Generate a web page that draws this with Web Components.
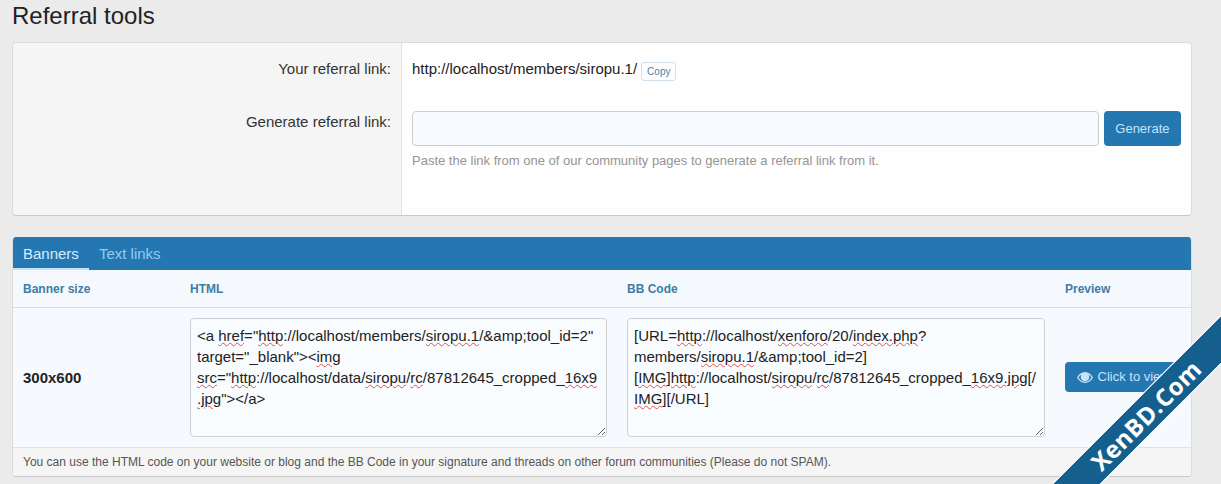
<!DOCTYPE html>
<html>
<head>
<meta charset="utf-8">
<title>Referral tools</title>
<style>
  html, body { margin: 0; height: 484px; overflow: hidden; }
  body { background: #ebebeb; color: #222; font: 15px/1.4 "Liberation Sans", Arial, sans-serif; }
  /* browser spell check look, drawn without splitting the text */
  rt-code::highlight(spell) { text-decoration: underline wavy #e05050 1px; text-underline-offset: 1px; }
</style>
</head>
<body>
<rt-page heading="Referral tools">
  <rt-form-card>
    <rt-form-row label="Your referral link:" label-top="5">
      <rt-link-value>http://localhost/members/siropu.1/</rt-link-value>
    </rt-form-row>
    <rt-form-row label="Generate referral link:" label-top="0">
      <rt-generate note="Paste the link from one of our community pages to generate a referral link from it."></rt-generate>
    </rt-form-row>
  </rt-form-card>

  <rt-block>
    <rt-tabs slot="tabs"></rt-tabs>
    <rt-head-row></rt-head-row>
    <rt-banner-row size="300x600">
      <rt-code slot="html" spell="href|http|siropu\.1|siropu|img|src|rc|16x9\.jpg">&lt;a href="http://localhost/members/siropu.1/&amp;amp;tool_id=2" target="_blank"&gt;&lt;img src="http://localhost/data/siropu/rc/87812645_cropped_16x9.jpg"&gt;&lt;/a&gt;</rt-code>
      <rt-code slot="bb" spell="http|xenforo|index\.php|siropu\.1|siropu|IMG|rc|16x9\.jpg">[URL=http://localhost/xenforo/20/index.php? members/siropu.1/&amp;amp;tool_id=2]<br>[IMG]http://localhost/siropu/rc/87812645_cropped_16x9.jpg[/<br>IMG][/URL]</rt-code>
      <rt-button slot="preview" icon="eye">Click to view</rt-button>
    </rt-banner-row>
    <rt-block-footer>You can use the HTML code on your website or blog and the BB Code in your signature and threads on other forum communities (Please do not SPAM).</rt-block-footer>
  </rt-block>
</rt-page>
<rt-ribbon>XenBD.Com</rt-ribbon>

<script>
// column widths shared by the head row and the banner rows
const COLS = '167px 437px 438px 1fr';

class RtPage extends HTMLElement {
  constructor() {
    super();
    this.attachShadow({ mode: 'open' });
    this.shadowRoot.innerHTML = `
      <style>
        :host { display: block; padding: 0 29px 0 12px; }
        h1 { margin: 0; height: 42px; font-size: 24px; font-weight: 400; line-height: 32px; color: #222; }
        .stack { display: flex; flex-direction: column; gap: 21px; }
      </style>
      <h1>${this.getAttribute('heading')}</h1>
      <div class="stack"><slot></slot></div>
    `;
  }
}

class RtFormCard extends HTMLElement {
  constructor() {
    super();
    this.attachShadow({ mode: 'open' });
    this.shadowRoot.innerHTML = `
      <style>
        :host {
          display: block;
          height: 174px;
          box-sizing: border-box;
          padding-top: 10px;
          border: 1px solid #dcdcdc;
          border-bottom-color: #c8c8c8;
          border-radius: 4px;
          background: linear-gradient(to right, #f5f5f5 388px, #e4e4e4 388px, #e4e4e4 389px, #fefefe 389px);
        }
      </style>
      <slot></slot>
    `;
  }
}

class RtFormRow extends HTMLElement {
  constructor() {
    super();
    this.attachShadow({ mode: 'open' });
    this.shadowRoot.innerHTML = `
      <style>
        :host { display: grid; grid-template-columns: 389px 1fr; }
        .label { padding: ${this.getAttribute('label-top')}px 11px 0 0; text-align: right; color: #333; }
        .value { padding: 0 10px 0 10px; }
      </style>
      <div class="label">${this.getAttribute('label')}</div>
      <div class="value"><slot></slot></div>
    `;
  }
}

class RtLinkValue extends HTMLElement {
  constructor() {
    super();
    this.attachShadow({ mode: 'open' });
    this.shadowRoot.innerHTML = `
      <style>
        :host { display: flex; align-items: center; gap: 4px; height: 31px; margin-bottom: 27px; color: #222; }
        .copy {
          height: 19px; padding: 0 5px; box-sizing: border-box;
          border: 1px solid #d3dfe8; border-radius: 3px;
          background: #fbfdff; color: #4f82a8; font-size: 10px; line-height: 18px;
          margin-top: 6px;
        }
      </style>
      <span><slot></slot></span>
      <span class="copy">Copy</span>
    `;
  }
}

class RtGenerate extends HTMLElement {
  constructor() {
    super();
    this.attachShadow({ mode: 'open' });
    this.shadowRoot.innerHTML = `
      <style>
        :host { display: block; }
        .line { display: flex; gap: 5px; }
        input {
          flex: 1; min-width: 0; height: 35px; box-sizing: border-box; margin: 0;
          border: 1px solid #ccc; border-radius: 4px; background: #f7fbff;
        }
        .note { margin-top: 6px; font-size: 13px; line-height: 18px; color: #959595; }
      </style>
      <div class="line"><input type="text"><rt-button>Generate</rt-button></div>
      <div class="note">${this.getAttribute('note')}</div>
    `;
  }
}

class RtButton extends HTMLElement {
  constructor() {
    super();
    this.attachShadow({ mode: 'open' });
    const eye = this.getAttribute('icon') === 'eye'
      ? `<svg width="16" height="11" viewBox="0 0 16 11"><path fill="#c4e4fb" fill-rule="evenodd" d="M8 0C4.600 0 1.700 2.100 0 5.500 1.700 8.900 4.600 11 8 11s6.300-2.100 8-5.500C14.300 2.100 11.400 0 8 0zM8 9.800C5.300 9.800 3 8.200 1.500 5.500 2.300 4.200 3.300 3.100 4.500 2.400 4 3.100 3.700 4 3.700 5c0 2.400 1.900 4.300 4.300 4.300s4.300-1.900 4.300-4.300c0-1-.3-1.900-.8-2.600 1.200.7 2.200 1.800 3 3.100C13 8.200 10.700 9.800 8 9.800z"/><circle cx="8" cy="5" r="3" fill="#c4e4fb"/></svg>`
      : '';
    this.shadowRoot.innerHTML = `
      <style>
        :host {
          display: inline-flex; align-items: center; gap: 5px;
          box-sizing: border-box; padding: 1px 11.5px 0;
          height: 35px;
          border-radius: 4px;
          background: #2577b1;
          color: #c4e4fb; font-size: 13px; white-space: nowrap;
        }
        :host([icon]) { height: 30px; margin-bottom: 2px; }
      </style>
      ${eye}<slot></slot>
    `;
  }
}

class RtBlock extends HTMLElement {
  constructor() {
    super();
    this.attachShadow({ mode: 'open' });
    this.shadowRoot.innerHTML = `
      <style>
        :host {
          display: block; height: 240px; box-sizing: border-box;
          border: 1px solid #dcdcdc; border-top: 0; border-bottom-color: #c8c8c8;
          border-radius: 4px; overflow: hidden; background: #f5f9fd;
        }
      </style>
      <slot name="tabs"></slot>
      <slot></slot>
    `;
  }
}

class RtTabs extends HTMLElement {
  constructor() {
    super();
    this.attachShadow({ mode: 'open' });
    this.shadowRoot.innerHTML = `
      <style>
        :host { display: flex; height: 33px; background: #2577b1; font-size: 15px; line-height: 33px; }
        a { display: block; padding: 0 10px; height: 33px; box-sizing: border-box; color: #8fcdf5; }
        a.active { color: #d5edff; border-bottom: 2px solid #c4e4fb; }
      </style>
      <a class="active">Banners</a>
      <a>Text links</a>
    `;
  }
}

class RtHeadRow extends HTMLElement {
  constructor() {
    super();
    this.attachShadow({ mode: 'open' });
    this.shadowRoot.innerHTML = `
      <style>
        :host {
          display: grid; grid-template-columns: ${COLS};
          height: 38px; box-sizing: border-box; padding-top: 1px;
          border-bottom: 1px solid #d8dfe5;
          background: #f5f9fd;
          color: #3d7da6; font-size: 12px; font-weight: 700; line-height: 36px;
        }
        div { padding-left: 10px; }
      </style>
      <div>Banner size</div><div>HTML</div><div>BB Code</div><div>Preview</div>
    `;
  }
}

class RtBannerRow extends HTMLElement {
  constructor() {
    super();
    this.attachShadow({ mode: 'open' });
    this.shadowRoot.innerHTML = `
      <style>
        :host {
          display: grid; grid-template-columns: ${COLS}; align-items: center;
          height: 139px; box-sizing: border-box; padding: 10px 0;
          background: #f6fafe;
        }
        .size { padding-left: 10px; font-size: 15px; font-weight: 700; color: #222; }
        .cell { padding: 0 10px; }
      </style>
      <div class="size">${this.getAttribute('size')}</div>
      <div class="cell"><slot name="html"></slot></div>
      <div class="cell"><slot name="bb"></slot></div>
      <div class="cell"><slot name="preview"></slot></div>
    `;
  }
}

class RtCode extends HTMLElement {
  constructor() {
    super();
    this.attachShadow({ mode: 'open' });
    this.shadowRoot.innerHTML = `
      <style>
        :host {
          display: block; height: 119px; box-sizing: border-box;
          padding: 6px; overflow: hidden; resize: both;
          border: 1px solid #d0d0d0; border-radius: 4px;
          background: #f9fcff; color: #222;
          font-size: 15px; line-height: 21px; overflow-wrap: anywhere;
        }
      </style>
      <slot></slot>
    `;
  }

  connectedCallback() {
    // mark every word of the spell attribute in the light DOM text
    const re = new RegExp(`(?<![a-z])(${this.getAttribute('spell')})`, 'g');
    const ranges = [];
    this.childNodes.forEach(node => {
      if (node.nodeType !== Node.TEXT_NODE) return;
      for (const m of node.data.matchAll(re)) {
        const range = new Range();
        range.setStart(node, m.index);
        range.setEnd(node, m.index + m[0].length);
        ranges.push(range);
      }
    });
    if (!window.Highlight) return;
    const spell = CSS.highlights.get('spell') || new Highlight();
    ranges.forEach(r => spell.add(r));
    CSS.highlights.set('spell', spell);
  }
}

class RtBlockFooter extends HTMLElement {
  constructor() {
    super();
    this.attachShadow({ mode: 'open' });
    this.shadowRoot.innerHTML = `
      <style>
        :host {
          display: block; height: 30px; box-sizing: border-box; padding-left: 10px;
          border-top: 1px solid #e0e0e0; background: #f5f5f5;
          color: #555; font-size: 12px; line-height: 29px;
        }
      </style>
      <slot></slot>
    `;
  }
}

class RtRibbon extends HTMLElement {
  constructor() {
    super();
    this.attachShadow({ mode: 'open' });
    this.shadowRoot.innerHTML = `
      <style>
        :host { position: absolute; left: 0; top: 0; width: 1221px; height: 484px; overflow: hidden; pointer-events: none; }
        .band {
          position: absolute; left: 897px; top: 397px; width: 500px; height: 33px;
          transform: rotate(-45deg);
          display: flex; align-items: center; justify-content: center;
          background: #155f8e;
          outline: 1px solid #fff;
          color: #fff; font: 700 24px/33px "Open Sans", sans-serif; letter-spacing: .4px;
        }
        span { position: relative; left: -2px; }
      </style>
      <div class="band"><span><slot></slot></span></div>
    `;
  }
}

customElements.define('rt-page', RtPage);
customElements.define('rt-form-card', RtFormCard);
customElements.define('rt-form-row', RtFormRow);
customElements.define('rt-link-value', RtLinkValue);
customElements.define('rt-generate', RtGenerate);
customElements.define('rt-button', RtButton);
customElements.define('rt-block', RtBlock);
customElements.define('rt-tabs', RtTabs);
customElements.define('rt-head-row', RtHeadRow);
customElements.define('rt-banner-row', RtBannerRow);
customElements.define('rt-code', RtCode);
customElements.define('rt-block-footer', RtBlockFooter);
customElements.define('rt-ribbon', RtRibbon);
</script>
</body>
</html>
